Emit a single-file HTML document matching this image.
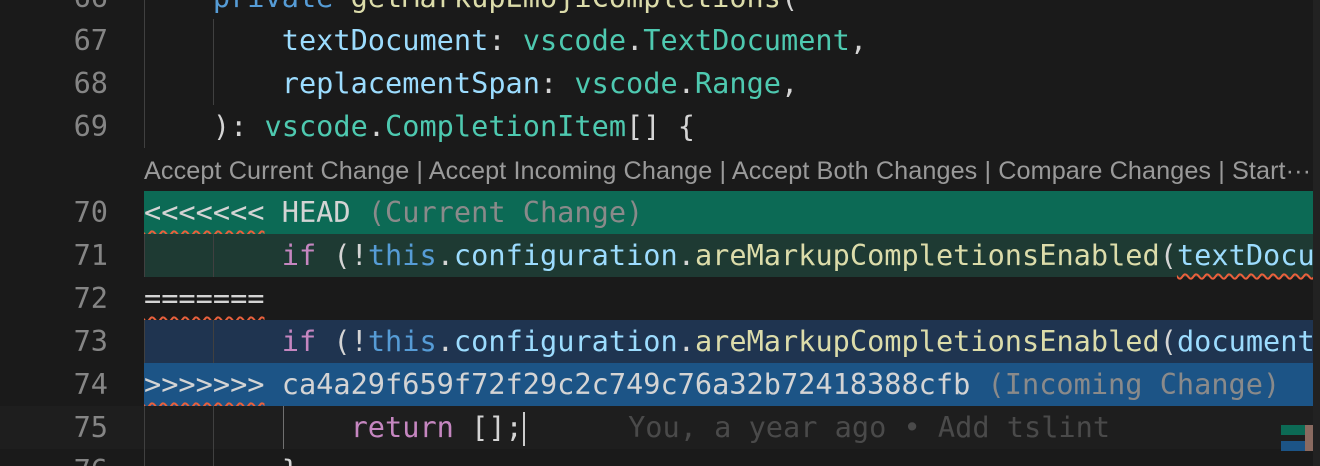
<!DOCTYPE html>
<html><head><meta charset="utf-8"><style>
html,body{margin:0;padding:0;background:#1a1a1a;width:1320px;height:466px;overflow:hidden}
#w{position:relative;width:1320px;height:466px;overflow:hidden}
.r{position:absolute;left:0;width:1313px;height:43px;font-family:"DejaVu Sans Mono","Liberation Mono",monospace;font-size:28.6px;line-height:43px;white-space:pre;color:#d4d4d4}
.n{position:absolute;left:0;width:108px;text-align:right;color:#858585}
.c{position:absolute;left:144px}
.bg{position:absolute;left:144px;right:0;top:0;bottom:0}
.g{position:absolute;top:0;bottom:0;width:1px;background:#404040}
.k{color:#569cd6}.f{color:#dcdcaa}.v{color:#9cdcfe}.t{color:#4ec9b0}.p{color:#c586c0}.gr{color:#8a8a8a}
.sq{text-decoration:underline wavy #e8603c;text-decoration-thickness:2px;text-underline-offset:8px}
.lens{position:absolute;left:144px;top:150px;font-family:"Liberation Sans",sans-serif;font-size:25.2px;letter-spacing:0.1px;color:#9a9a9a;white-space:pre;line-height:43px}
</style></head><body><div id="w">
<div class="r" style="top:-24px"><span class="n">66</span><div class="g" style="left:144px"></div><span class="c">    <span class="k">private</span> <span class="f">getMarkupEmojiCompletions</span>(</span></div>
<div class="r" style="top:19px"><span class="n">67</span><div class="g" style="left:144px"></div><div class="g" style="left:213px"></div><span class="c">        <span class="v">textDocument</span>: <span class="t">vscode</span>.<span class="t">TextDocument</span>,</span></div>
<div class="r" style="top:62px"><span class="n">68</span><div class="g" style="left:144px"></div><div class="g" style="left:213px"></div><span class="c">        <span class="v">replacementSpan</span>: <span class="t">vscode</span>.<span class="t">Range</span>,</span></div>
<div class="r" style="top:105px"><span class="n">69</span><div class="g" style="left:144px"></div><span class="c">    ): <span class="t">vscode</span>.<span class="t">CompletionItem</span>[] {</span></div>
<div class="lens">Accept Current Change | Accept Incoming Change | Accept Both Changes | Compare Changes | Start···</div>
<div class="r" style="top:191px"><div class="bg" style="background:#0c6a55"></div><span class="n">70</span><span class="c"><span class="sq">&lt;&lt;&lt;&lt;&lt;&lt;&lt;</span> HEAD <span class="gr">(Current Change)</span></span></div>
<div class="r" style="top:234px"><div class="bg" style="background:#1e3a33"></div><span class="n">71</span><div class="g" style="left:144px"></div><div class="g" style="left:213px"></div><span class="c">        <span class="p">if</span> (!<span class="k">this</span>.<span class="v">configuration</span>.<span class="f">areMarkupCompletionsEnabled</span>(<span class="v sq">textDocument</span>)</span></div>
<div class="r" style="top:277px"><span class="n">72</span><span class="c"><span class="sq">=======</span></span></div>
<div class="r" style="top:320px"><div class="bg" style="background:#1f3450"></div><span class="n">73</span><div class="g" style="left:144px"></div><div class="g" style="left:213px"></div><span class="c">        <span class="p">if</span> (!<span class="k">this</span>.<span class="v">configuration</span>.<span class="f">areMarkupCompletionsEnabled</span>(<span class="v">document</span>)</span></div>
<div class="r" style="top:363px"><div class="bg" style="background:#1c5486"></div><span class="n">74</span><span class="c"><span class="sq">&gt;&gt;&gt;&gt;&gt;&gt;&gt;</span> ca4a29f659f72f29c2c749c76a32b72418388cfb <span class="gr">(Incoming Change)</span></span></div>
<div class="r" style="top:406px;background:#1e1e1e"><span class="n">75</span><div class="g" style="left:144px"></div><div class="g" style="left:213px"></div><div class="g" style="left:283px;background:#707070"></div><span class="c">            <span class="p">return</span> [];<span style="display:inline-block;width:2px;height:34px;background:#ccc;vertical-align:middle"></span>      <span style="color:#4a4a4a">You, a year ago • Add tslint</span></span></div>
<div class="r" style="top:449px"><span class="n">76</span><div class="g" style="left:144px"></div><div class="g" style="left:213px"></div><span class="c">        }</span></div>
<div style="position:absolute;left:1313px;top:0;width:7px;height:466px;background:#222"></div>
<div style="position:absolute;left:1281px;top:425px;width:24px;height:10px;background:#0c6a55"></div>
<div style="position:absolute;left:1281px;top:441px;width:24px;height:10px;background:#1c5486"></div>
<div style="position:absolute;left:1305px;top:425px;width:8px;height:26px;background:#8a6a60"></div>
</div></body></html>
